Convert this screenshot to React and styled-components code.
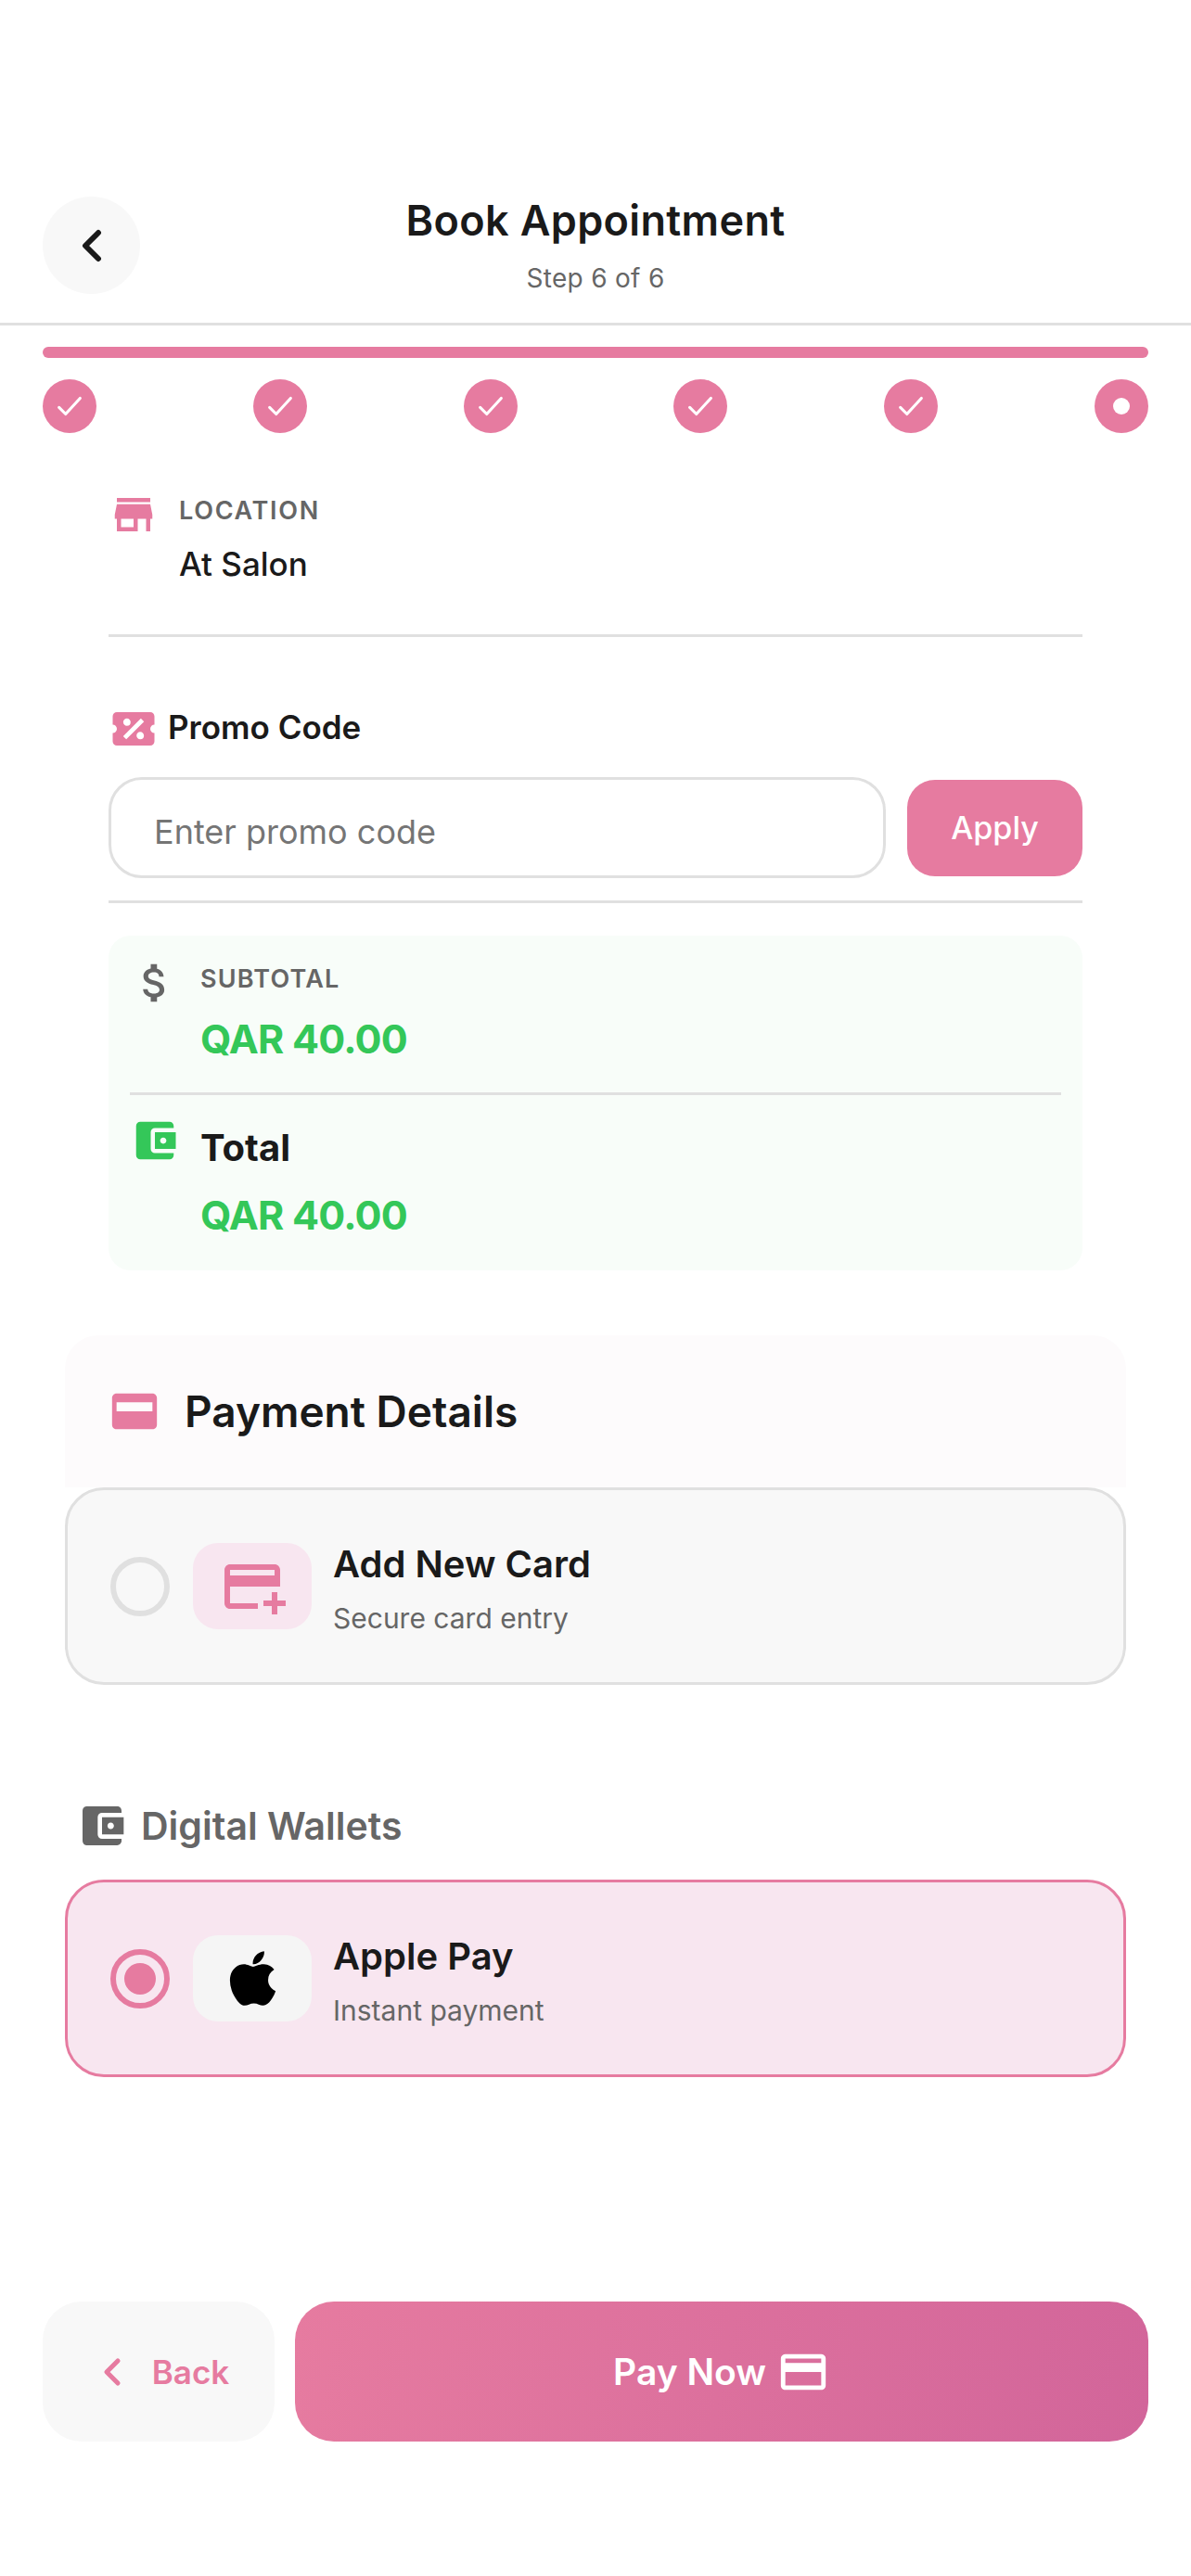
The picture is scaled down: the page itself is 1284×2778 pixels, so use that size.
import React from "react";
import styled, { createGlobalStyle } from "styled-components";
import {
  MdStore,
  MdAttachMoney,
  MdAccountBalanceWallet,
  MdAddCard,
  MdPayment,
} from "react-icons/md";
import { FaApple } from "react-icons/fa";

const PINK = "#e67ba0";
const INK = "#1a1a1a";
const GREY = "#666666";
const LINE = "#e0e0e0";
const GREEN = "#34c759";

const Global = createGlobalStyle`
  html, body {
    margin: 0;
    padding: 0;
    background: #ffffff;
  }
  * {
    box-sizing: border-box;
  }
  body {
    font-family: Inter, "Noto Sans", "Liberation Sans", sans-serif;
  }
`;

const Page = styled.div`
  width: 1284px;
  height: 2778px;
  overflow: hidden;
  background: #ffffff;
  color: ${INK};
`;

const Header = styled.header`
  display: grid;
  grid-template-columns: 105px 1fr 105px;
  padding: 212px 46px 31px;
  border-bottom: 3px solid ${LINE};
`;

const RoundBack = styled.button`
  width: 105px;
  height: 105px;
  border: 0;
  padding: 0;
  border-radius: 50%;
  background: #f8f8f8;
  display: flex;
  align-items: center;
  justify-content: center;
`;

const HeaderText = styled.div`
  text-align: center;
`;

const Title = styled.h1`
  margin: 0;
  font-size: 45px;
  line-height: 52px;
  font-weight: 600;
  letter-spacing: 0.35px;
`;

const StepText = styled.p`
  margin: 20px 0 0;
  font-size: 28px;
  line-height: 33px;
  font-weight: 400;
  color: ${GREY};
  letter-spacing: 0.3px;
`;

const Progress = styled.div`
  padding: 23px 46px 0;
`;

const Bar = styled.div`
  height: 12px;
  border-radius: 6px;
  background: ${PINK};
`;

const Steps = styled.div`
  margin-top: 23px;
  display: flex;
  justify-content: space-between;
`;

const StepDot = styled.div`
  width: 58px;
  height: 58px;
  border-radius: 50%;
  background: ${PINK};
  color: #ffffff;
  display: flex;
  align-items: center;
  justify-content: center;
`;

const CurrentDot = styled.span`
  width: 18px;
  height: 18px;
  border-radius: 50%;
  background: #ffffff;
`;

const Details = styled.section`
  padding: 61px 117px 0;
`;

const LocationRow = styled.div`
  display: flex;
  gap: 22px;
  padding-bottom: 51px;
  border-bottom: 3px solid ${LINE};
  color: ${PINK};
`;

const Label = styled.div`
  font-size: 27px;
  line-height: 46px;
  font-weight: 600;
  letter-spacing: ${(p) => p.$spacing}px;
  color: ${GREY};
`;

const LocationValue = styled.div`
  margin-top: 9px;
  font-size: 35px;
  line-height: 50px;
  font-weight: 500;
  color: ${INK};
`;

const PromoHeading = styled.div`
  margin-top: 72px;
  display: flex;
  align-items: center;
  gap: 10px;
  color: ${PINK};
  & > span {
    padding-bottom: 4px;
    font-size: 35px;
    font-weight: 600;
    color: ${INK};
  }
`;

const PromoRow = styled.div`
  margin-top: 25px;
  padding-bottom: 24px;
  display: flex;
  align-items: center;
  gap: 23px;
  border-bottom: 3px solid ${LINE};
`;

const PromoInput = styled.input`
  flex: 1;
  min-width: 0;
  height: 109px;
  padding: 8px 46px 0;
  border: 3px solid ${LINE};
  border-radius: 36px;
  background: #ffffff;
  font-family: inherit;
  font-size: 36px;
  outline: none;
  &::placeholder {
    color: #757575;
    opacity: 1;
  }
`;

const ApplyButton = styled.button`
  width: 189px;
  height: 104px;
  border: 0;
  border-radius: 30px;
  background: ${PINK};
  color: #ffffff;
  font-family: inherit;
  font-size: 34px;
  font-weight: 500;
`;

const Summary = styled.div`
  margin-top: 35px;
  padding: 24px 23px 32px;
  border-radius: 24px;
  background: #f8fdf9;
`;

const SummaryRow = styled.div`
  display: flex;
  gap: 22px;
  color: ${(p) => p.$color};
`;

const Amount = styled.div`
  margin-top: ${(p) => p.$top}px;
  font-size: 43px;
  line-height: 56px;
  font-weight: 700;
  letter-spacing: -0.8px;
  color: ${GREEN};
`;

const SummaryLine = styled.div`
  margin: 30px 0 22px;
  height: 3px;
  background: ${LINE};
`;

const TotalLabel = styled.div`
  padding-top: 7px;
  font-size: 40px;
  line-height: 56px;
  font-weight: 700;
  color: ${INK};
`;

const Payment = styled.section`
  padding: 70px 70px 0;
`;

const PaymentHeader = styled.div`
  height: 164px;
  padding-left: 46px;
  display: flex;
  align-items: center;
  gap: 25px;
  border-radius: 36px 36px 0 0;
  background: #fdfbfc;
  color: ${PINK};
  & > span {
    font-size: 46px;
    font-weight: 600;
    color: ${INK};
  }
`;

const OptionCard = styled.div`
  height: 213px;
  padding-left: 46px;
  display: flex;
  align-items: center;
  border-radius: 42px;
  border: 3px solid ${(p) => (p.$selected ? PINK : LINE)};
  background: ${(p) => (p.$selected ? "#f8e6f0" : "#f8f8f8")};
`;

const Radio = styled.div`
  width: 64px;
  height: 64px;
  flex: none;
  border-radius: 50%;
  border: 6px solid ${(p) => (p.$selected ? PINK : LINE)};
  display: flex;
  align-items: center;
  justify-content: center;
  &::after {
    content: "";
    display: ${(p) => (p.$selected ? "block" : "none")};
    width: 34px;
    height: 34px;
    border-radius: 50%;
    background: ${PINK};
  }
`;

const OptionIcon = styled.div`
  width: 128px;
  height: 93px;
  flex: none;
  margin: 0 23px 0 25px;
  border-radius: 27px;
  background: ${(p) => p.$bg};
  color: ${(p) => p.$color};
  display: flex;
  align-items: center;
  justify-content: center;
`;

const OptionText = styled.div`
  margin-top: 8px;
`;

const OptionTitle = styled.div`
  font-size: 40px;
  line-height: 50px;
  font-weight: 600;
  color: ${INK};
`;

const OptionSub = styled.div`
  margin-top: 11px;
  font-size: 30px;
  line-height: 44px;
  font-weight: 400;
  color: ${GREY};
`;

const WalletHeading = styled.div`
  margin: 124px 0 30px;
  padding-left: 12px;
  display: flex;
  align-items: center;
  gap: 14px;
  color: ${GREY};
  & > span {
    font-size: 41px;
    font-weight: 600;
  }
`;

const Footer = styled.footer`
  margin-top: 242px;
  padding: 0 46px;
  display: flex;
  gap: 22px;
`;

const BackButton = styled.button`
  width: 250px;
  height: 151px;
  padding: 0 0 0 8px;
  border: 0;
  border-radius: 42px;
  background: #f8f8f8;
  color: ${PINK};
  font-family: inherit;
  font-size: 35px;
  font-weight: 600;
  display: flex;
  align-items: center;
  justify-content: center;
  gap: 25px;
`;

const PayButton = styled.button`
  flex: 1;
  height: 151px;
  border: 0;
  border-radius: 42px;
  background: linear-gradient(100deg, #e67ba0 0%, #d2659a 100%);
  color: #ffffff;
  font-family: inherit;
  font-size: 39px;
  font-weight: 600;
  display: flex;
  align-items: center;
  justify-content: center;
  gap: 11px;
`;

const Chevron = ({ size, width, color }) => (
  <svg width={size} height={size} viewBox="0 0 24 24" fill="none">
    <path d="M16 4 L8 12 L16 20" stroke={color} strokeWidth={width} strokeLinecap="round" strokeLinejoin="round" />
  </svg>
);

const Tick = () => (
  <svg width="34" height="34" viewBox="0 0 24 24" fill="none">
    <path d="M4 13 L9 18 L20 6" stroke="#ffffff" strokeWidth="2.2" strokeLinecap="round" strokeLinejoin="round" />
  </svg>
);

const TicketPercent = ({ size }) => (
  <svg width={size} height={size} viewBox="0 0 24 24" fill="currentColor">
    <path d="M4,4A2,2 0 0,0 2,6V10C3.11,10 4,10.9 4,12A2,2 0 0,1 2,14V18A2,2 0 0,0 4,20H20A2,2 0 0,0 22,18V14A2,2 0 0,1 20,12C20,10.89 20.9,10 22,10V6C22,4.89 21.1,4 20,4H4M15.5,7L17,8.5L8.5,17L7,15.5L15.5,7M8.81,7.04C9.79,7.04 10.58,7.83 10.58,8.81A1.77,1.77 0 0,1 8.81,10.58C7.83,10.58 7.04,9.79 7.04,8.81C7.04,7.83 7.83,7.04 8.81,7.04M15.19,13.42C16.17,13.42 16.96,14.21 16.96,15.19A1.77,1.77 0 0,1 15.19,16.96C14.21,16.96 13.42,16.17 13.42,15.19C13.42,14.21 14.21,13.42 15.19,13.42Z" />
  </svg>
);

const FilledCard = ({ size }) => (
  <svg width={size} height={size} viewBox="0 0 24 24" fill="currentColor">
    <path d="M20 4H4c-1.11 0-2 .89-2 2v12c0 1.11.89 2 2 2h16c1.11 0 2-.89 2-2V6c0-1.11-.89-2-2-2zm0 8H4V8h16v4z" fillRule="evenodd" />
  </svg>
);

const STEPS = [1, 2, 3, 4, 5, 6];

export default function App() {
  return (
    <Page>
      <Global />
      <Header>
        <RoundBack>
          <Chevron size={42} width={3.4} color={INK} />
        </RoundBack>
        <HeaderText>
          <Title>Book Appointment</Title>
          <StepText>Step 6 of 6</StepText>
        </HeaderText>
      </Header>

      <Progress>
        <Bar />
        <Steps>
          {STEPS.map((n) => (
            <StepDot key={n}>{n < 6 ? <Tick /> : <CurrentDot />}</StepDot>
          ))}
        </Steps>
      </Progress>

      <Details>
        <LocationRow>
          <MdStore size={54} />
          <div>
            <Label $spacing={1.7}>LOCATION</Label>
            <LocationValue>At Salon</LocationValue>
          </div>
        </LocationRow>

        <PromoHeading>
          <TicketPercent size={54} />
          <span>Promo Code</span>
        </PromoHeading>
        <PromoRow>
          <PromoInput placeholder="Enter promo code" readOnly />
          <ApplyButton>Apply</ApplyButton>
        </PromoRow>

        <Summary>
          <SummaryRow $color={GREY}>
            <MdAttachMoney size={54} />
            <div>
              <Label $spacing={1.2}>SUBTOTAL</Label>
              <Amount $top={13}>QAR 40.00</Amount>
            </div>
          </SummaryRow>
          <SummaryLine />
          <SummaryRow $color={GREEN}>
            <MdAccountBalanceWallet size={54} />
            <div>
              <TotalLabel>Total</TotalLabel>
              <Amount $top={16}>QAR 40.00</Amount>
            </div>
          </SummaryRow>
        </Summary>
      </Details>

      <Payment>
        <PaymentHeader>
          <FilledCard size={58} />
          <span>Payment Details</span>
        </PaymentHeader>
        <OptionCard>
          <Radio />
          <OptionIcon $bg="#f8e6f0" $color={PINK}>
            <MdAddCard size={72} />
          </OptionIcon>
          <OptionText>
            <OptionTitle>Add New Card</OptionTitle>
            <OptionSub>Secure card entry</OptionSub>
          </OptionText>
        </OptionCard>

        <WalletHeading>
          <MdAccountBalanceWallet size={56} />
          <span>Digital Wallets</span>
        </WalletHeading>
        <OptionCard $selected>
          <Radio $selected />
          <OptionIcon $bg="#f5f5f5" $color="#000000">
            <FaApple size={67} />
          </OptionIcon>
          <OptionText>
            <OptionTitle>Apple Pay</OptionTitle>
            <OptionSub>Instant payment</OptionSub>
          </OptionText>
        </OptionCard>
      </Payment>

      <Footer>
        <BackButton>
          <Chevron size={36} width={3.4} color={PINK} />
          Back
        </BackButton>
        <PayButton>
          Pay Now
          <MdPayment size={58} />
        </PayButton>
      </Footer>
    </Page>
  );
}
